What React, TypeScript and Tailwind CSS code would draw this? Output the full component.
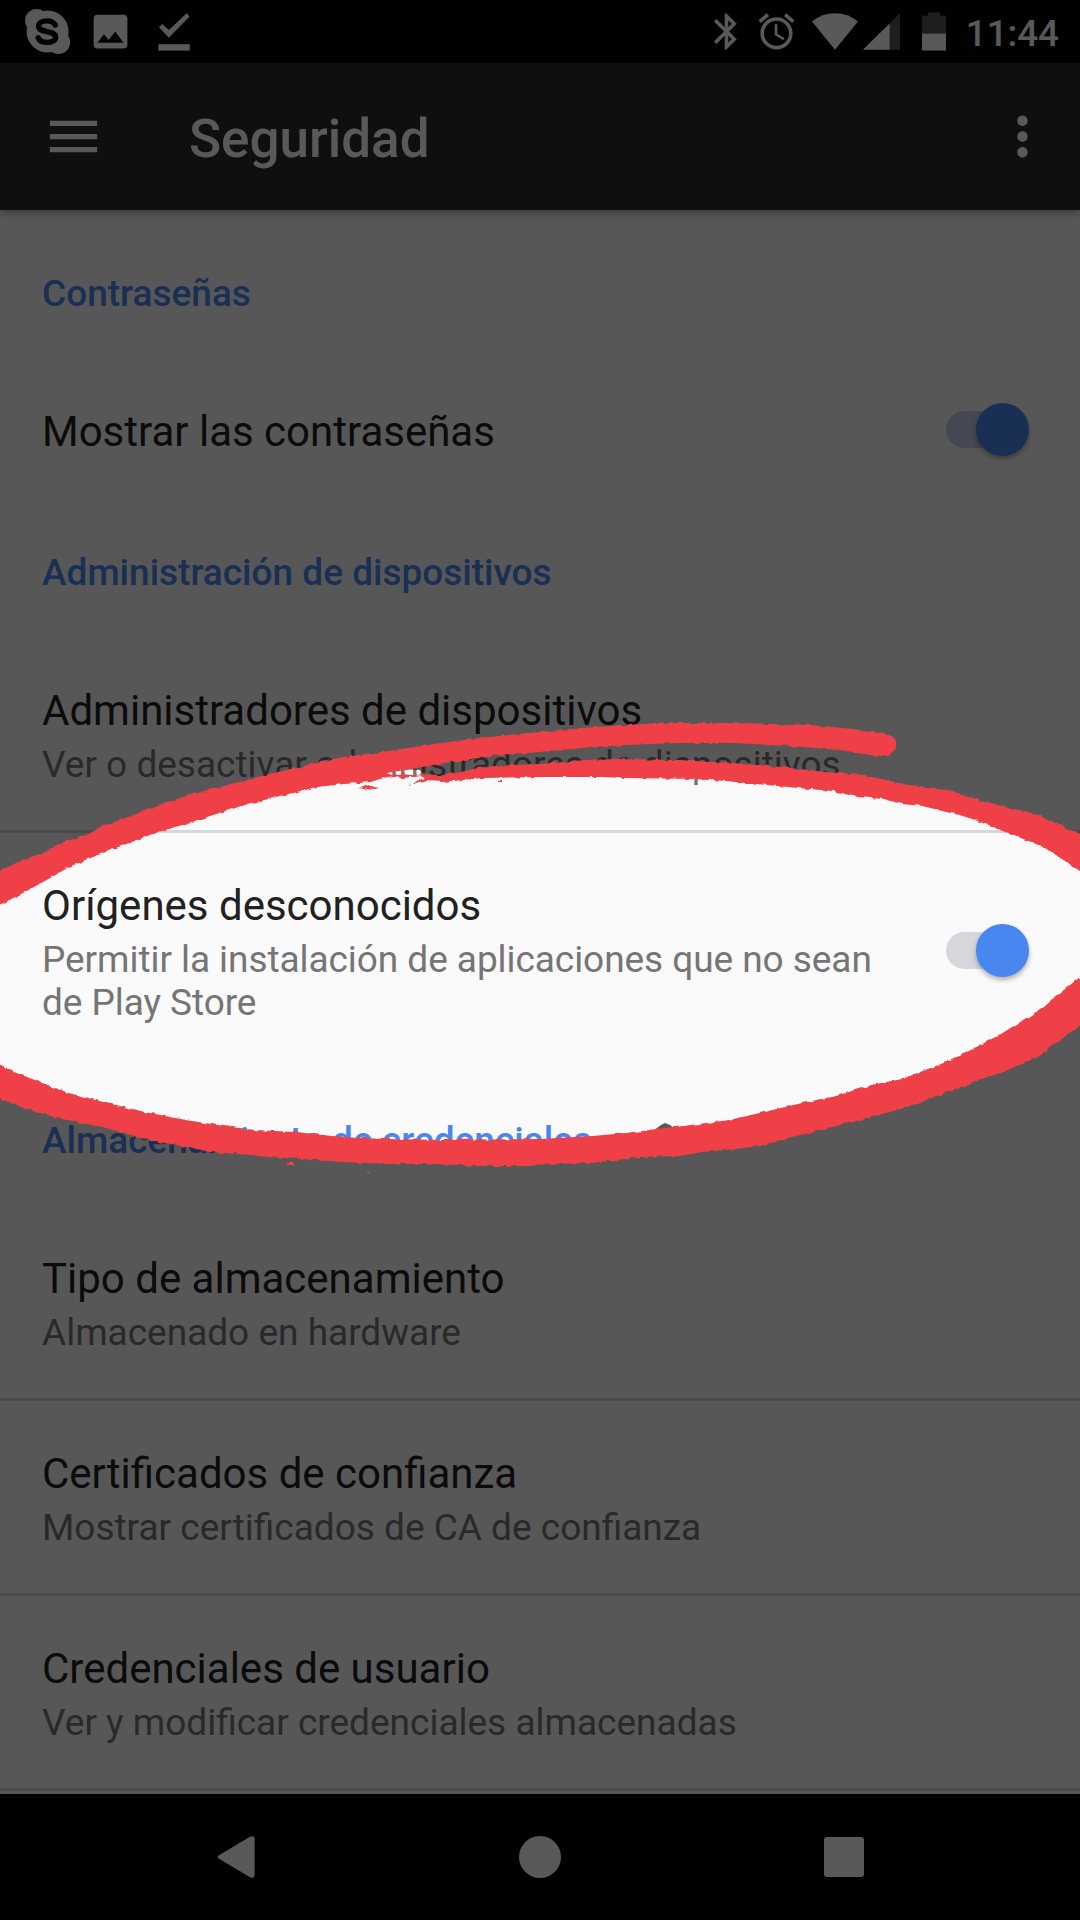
import React from "react";
import { MdAccessAlarm, MdBluetooth, MdImage, MdMenu, MdMoreVert } from "react-icons/md";

function SkypeLogo() {
  return (
    <svg className="h-[45px] w-[45px]" viewBox="25 9 45 45" fill="currentColor">
      <circle cx="47.6" cy="31.5" r="21" />
      <circle cx="36.6" cy="20.6" r="11.6" />
      <circle cx="58.6" cy="42.4" r="11.6" />
      <path
        d="M55.2 25C53.6 21.8 50.4 20.9 46.8 20.9 42 20.9 38.6 22.9 38.6 26.1 38.6 30 42.5 30.6 47 31.6 52 32.7 55.6 33.6 55.6 37.3 55.6 40.6 52 42.4 47 42.4 42.6 42.4 39.6 41 38.2 37.8"
        fill="none"
        stroke="#030303"
        strokeWidth="5.4"
        strokeLinecap="round"
      />
    </svg>
  );
}

function StatusBar() {
  return (
    <div className="flex h-[63px] items-center justify-between bg-[#030303] pl-[25px] pr-[21px] text-white">
      <div className="flex items-center">
        <SkypeLogo />
        <MdImage className="ml-[18px] h-[45px] w-[45px]" />
        <svg className="ml-[25px] h-[40px] w-[32px]" viewBox="158 11.5 32 40" fill="currentColor">
          <path d="M159 26.8 162.2 23.4 168.9 29.6 186.6 12.8 189.6 15.9 168.9 37.3Z" />
          <path d="M158.4 43.7h31.4v6.4h-31.4z" />
        </svg>
      </div>
      <div className="flex items-center">
        <MdBluetooth className="h-[43px] w-[43px]" />
        <MdAccessAlarm className="ml-[7px] h-[43px] w-[43px]" />
        <svg className="ml-[14px] h-[40px] w-[46px]" viewBox="813 11.5 46 40" fill="currentColor">
          <path d="M836 49.2 813 21Q823 12.7 836 12.7T859 21Z" />
        </svg>
        <svg className="ml-[5px] h-[40px] w-[37px]" viewBox="864 11.5 37 40" fill="currentColor">
          <path d="M864 49.3 901 12.7V49.3Z" opacity="0.33" />
          <path d="M864 49.3 890.6 23V49.3Z" />
        </svg>
        <svg className="ml-[22px] h-[40px] w-[24px]" viewBox="922 11.5 24 40" fill="currentColor">
          <path d="M922 33V15.3h6V12h12v3.3h6V33Z" opacity="0.33" />
          <path d="M922 33h24v17h-24z" />
        </svg>
        <span className="ml-[20px] mt-[4px] text-[36.75px] font-medium leading-[43px]">11:44</span>
      </div>
    </div>
  );
}

function AppBar() {
  return (
    <div className="relative flex h-[147px] items-center bg-[#2b2b2b] pl-[42px] pr-[26px] text-white shadow-[0_3px_9px_rgba(0,0,0,0.35)]">
      <MdMenu className="h-[63px] w-[63px]" />
      <h1 className="ml-[84px] mt-[4px] flex-1 text-[53px] font-medium leading-[62px]">Seguridad</h1>
      <MdMoreVert className="h-[63px] w-[63px]" />
    </div>
  );
}

function Category({ children }: { children: React.ReactNode }) {
  return (
    <h2 className="px-[42px] pb-[44px] pt-[42px] text-[37px] font-medium leading-[43px] text-[#4886f0]">
      {children}
    </h2>
  );
}

function Toggle({ track }: { track: string }) {
  return (
    <div className="-mt-[9px] mr-[9px] flex h-[53px] w-[83px] shrink-0 items-center">
      <div className={"h-[37px] w-[61px] rounded-full " + track} />
      <div className="-ml-[31px] h-[53px] w-[53px] shrink-0 rounded-full bg-[#4886f0] shadow-[0_3px_5px_rgba(0,0,0,0.3)]" />
    </div>
  );
}

type RowProps = {
  title: string;
  summary?: string;
  height?: string;
  summaryTracking?: string;
  divider?: boolean;
  toggle?: string;
};

function Row({ title, summary, height = "h-[192px]", summaryTracking = "", divider, toggle }: RowProps) {
  return (
    <>
      <div className={"flex items-center px-[42px] " + height}>
        <div className="w-[860px] self-start pt-[48px]">
          <div className="text-[42px] leading-[50px] text-[#212121]">{title}</div>
          {summary && (
            <div className={"mt-[7px] text-[37px] leading-[43px] text-[#757575] " + summaryTracking}>
              {summary}
            </div>
          )}
        </div>
        {toggle && (
          <div className="ml-auto">
            <Toggle track={toggle} />
          </div>
        )}
      </div>
      {divider && <div className="h-[3px] bg-[#d6d7dc]" />}
    </>
  );
}

function NavBar() {
  return (
    <div className="flex h-[126px] items-center bg-black text-white">
      <svg className="ml-[217px] h-[42px] w-[38px]" viewBox="0 0 38 42" fill="currentColor">
        <path d="M2 19.2 33 .8Q37.6-1 37.6 3V39Q37.6 43 33 41.2L2 22.8Q-.6 21 2 19.2Z" />
      </svg>
      <div className="ml-[264px] h-[42px] w-[42px] rounded-full bg-white" />
      <div className="ml-[263px] h-[40px] w-[40px] rounded-[3px] bg-white" />
    </div>
  );
}

const SHADE =
  "M0 0H1080V850L1070 843 1048 832 1010 818 970 806 930 797 880 787 830 781 780 776 730 771 678 769 616 768 560 770 500 772 450 777 424 778 420 770 386 768 344 772 300 780 248 793 200 808 150 827 100 844 50 866 0 888V1082L40 1100 90 1113 150 1130 210 1140 270 1146 340 1151 430 1153 540 1152 640 1145 720 1136 790 1119 870 1098 940 1078 1000 1052 1040 1032 1080 1000V1920H0Z";

const TOP_STROKE =
  "M-12 877L0 871 22 860 45 852 64 842 86 835 100 827 131 816 158 806 186 796 220 787 265 775 300 767 337 758 389 751 441 743 479 738 540 732 581 728 643 724 678 723 729 723 774 724 809 725 843 728 881 732 891 736 896 742 896 749 889 755 877 756 840 750 791 746 733 743 678 743 626 745 592 747 540 752 499 755 451 762 427 766 413 769 386 773 395 776 382 778 372 782 344 784 317 787 289 794 248 804 207 817 179 826 155 833 124 845 93 857 69 867 52 877 14 898 0 905-12 911Z";

const RIGHT_STROKE =
  "M417 774L440 775 461 772 482 767 510 765 540 764 585 760 616 759 678 760 733 763 781 767 826 772 864 775 908 785 946 789 970 797 994 804 1032 813 1056 823 1080 834 1092 840V880L1080 871 1056 855 1043 847 1022 838 1001 830 988 825 967 817 943 811 922 806 902 804 884 799 857 797 833 791 798 788 757 784 726 781 695 779 626 778 602 777 561 777 540 777 482 778 444 782 424 781 407 785 424 778Z";

const BOTTOM_STROKE =
  "M-12 1060L0 1065 14 1072 45 1084 69 1093 107 1103 145 1112 186 1120 224 1126 255 1130 296 1132 341 1137 386 1139 444 1140 540 1139 592 1136 626 1133 657 1129 692 1125 729 1120 764 1112 802 1103 836 1096 871 1085 902 1079 946 1062 967 1052 984 1043 1001 1034 1012 1027 1029 1017 1044 1007 1060 993 1080 977 1092 966V1015L1080 1025 1067 1035 1036 1058 1001 1073 984 1078 964 1087 933 1097 905 1108 864 1119 829 1128 788 1138 760 1146 726 1150 702 1152 681 1156 640 1157 592 1163 547 1164 530 1166 479 1166 434 1164 389 1164 344 1162 303 1159 269 1157 241 1154 210 1152 193 1148 165 1143 141 1138 103 1127 62 1119 34 1111 17 1106 0 1098-12 1092Z";

function Spotlight() {
  return (
    <svg className="pointer-events-none absolute inset-0 h-[1920px] w-[1080px]" viewBox="0 0 1080 1920">
      <defs>
        <filter
          id="rough"
          filterUnits="userSpaceOnUse"
          colorInterpolationFilters="sRGB"
          x="-20"
          y="700"
          width="1120"
          height="490"
        >
          <feTurbulence type="fractalNoise" baseFrequency="0.14" numOctaves="2" seed="4" result="noise" />
          <feDisplacementMap in="SourceGraphic" in2="noise" scale="4" xChannelSelector="R" yChannelSelector="G" />
        </filter>
      </defs>
      <path d={SHADE} fill="#000000" fillOpacity="0.65" />
      <path d="M653 1131 661 1125 665 1123 670 1125 676 1130Z" fill="#575757" />
      <g fill="#ef4048" filter="url(#rough)">
        <path d={TOP_STROKE} />
        <path d={RIGHT_STROKE} />
        <path d={BOTTOM_STROKE} />
        <path d="M359 787 366 785 380 788 372 790Z" />
        <path d="M390 777 402 774 422 776 402 778Z" />
        <path d="M498 780h4v2h-4z" />
        <path d="M287 1163h7v2h-7z" />
        <path d="M368 1172h2v1h-2z" />
      </g>
    </svg>
  );
}

export default function App() {
  return (
    <div className="relative flex h-[1920px] w-[1080px] flex-col overflow-hidden bg-[#fafafa] font-[Roboto,sans-serif]">
      <StatusBar />
      <AppBar />
      <main className="flex-1 pt-[20px]">
        <Category>Contraseñas</Category>
        <Row title="Mostrar las contraseñas" height="h-[150px]" toggle="bg-[#bfcdea]" />
        <Category>Administración de dispositivos</Category>
        <Row
          title="Administradores de dispositivos"
          summary="Ver o desactivar administradores de dispositivos"
          divider
        />
        <Row
          title="Orígenes desconocidos"
          summary="Permitir la instalación de aplicaciones que no sean de Play Store"
          summaryTracking="tracking-[-0.06px]"
          height="h-[244px]"
          toggle="bg-[#d6d7dc]"
        />
        <Category>Almacenamiento de credenciales</Category>
        <Row title="Tipo de almacenamiento" summary="Almacenado en hardware" divider />
        <Row title="Certificados de confianza" summary="Mostrar certificados de CA de confianza" divider />
        <Row title="Credenciales de usuario" summary="Ver y modificar credenciales almacenadas" divider />
      </main>
      <NavBar />
      <Spotlight />
    </div>
  );
}
